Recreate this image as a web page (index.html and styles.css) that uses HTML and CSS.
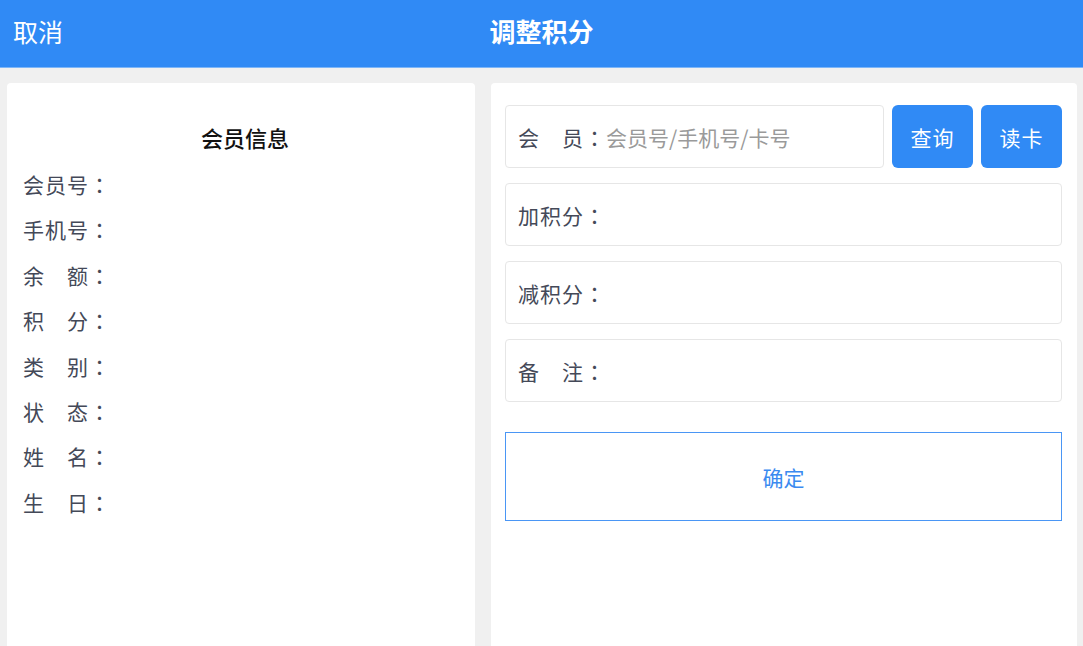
FILE: index.html
```html
<!DOCTYPE html>
<html lang="zh-CN">
<head>
    <meta charset="UTF-8">
    <meta name="viewport" content="width=device-width, initial-scale=1.0">
    <title>调整积分</title>
    <link rel="stylesheet" href="styles.css">
</head>
<body>
    <header class="topbar">
        <span class="topbar-cancel">取消</span>
        <h1 class="topbar-title">调整积分</h1>
    </header>

    <main class="layout">
        <section class="panel member-panel">
            <h2 class="member-title">会员信息</h2>
            <ul class="member-list">
                <li>会员号<span class="colon" lang="zh-TW">：</span></li>
                <li>手机号<span class="colon" lang="zh-TW">：</span></li>
                <li>余　额<span class="colon" lang="zh-TW">：</span></li>
                <li>积　分<span class="colon" lang="zh-TW">：</span></li>
                <li>类　别<span class="colon" lang="zh-TW">：</span></li>
                <li>状　态<span class="colon" lang="zh-TW">：</span></li>
                <li>姓　名<span class="colon" lang="zh-TW">：</span></li>
                <li>生　日<span class="colon" lang="zh-TW">：</span></li>
            </ul>
        </section>

        <section class="panel form-panel">
            <div class="search-row">
                <label class="field">
                    <span class="field-label">会　员<span class="colon" lang="zh-TW">：</span></span>
                    <input type="text" class="field-input" placeholder="会员号/手机号/卡号">
                </label>
                <button class="btn">查询</button>
                <button class="btn">读卡</button>
            </div>
            <label class="field">
                <span class="field-label">加积分<span class="colon" lang="zh-TW">：</span></span>
                <input type="text" class="field-input">
            </label>
            <label class="field">
                <span class="field-label">减积分<span class="colon" lang="zh-TW">：</span></span>
                <input type="text" class="field-input">
            </label>
            <label class="field">
                <span class="field-label">备　注<span class="colon" lang="zh-TW">：</span></span>
                <input type="text" class="field-input">
            </label>
            <button class="confirm-btn">确定</button>
        </section>
    </main>
</body>
</html>
```

FILE: styles.css
```css
:root {
    --blue: #308af5;
    --bg: #f0f0f0;
    --label: #444958;
    --border: #e6e6e6;
}

* {
    box-sizing: border-box;
    margin: 0;
    padding: 0;
}

html, body {
    height: 100%;
}

body {
    font-family: "Noto Sans CJK SC", "Noto Sans", sans-serif;
    background: var(--bg);
    overflow: hidden;
}

.topbar {
    height: 68px;
    background: var(--blue);
    border-bottom: 1px solid #7db6f8;
    color: #fff;
    display: flex;
    align-items: center;
    justify-content: center;
    position: relative;
}

.topbar-cancel {
    position: absolute;
    left: 13px;
    top: 12px;
    font-size: 25px;
    line-height: 38px;
}

.topbar-title {
    font-size: 26px;
    font-weight: bold;
    line-height: 38px;
    margin-top: -5px;
}

.layout {
    display: flex;
    gap: 16px;
    padding: 15px 6px 0 7px;
    height: calc(100% - 68px);
}

.panel {
    background: #fff;
    border-radius: 4px 4px 0 0;
}

.member-panel {
    width: 468px;
    padding: 31px 16px 0;
}

.member-title {
    text-align: center;
    font-size: 22px;
    font-weight: 500;
    color: #111;
    line-height: 46px;
    margin-bottom: 2px;
    padding-left: 8px;
}

.member-list {
    list-style: none;
    font-size: 21px;
    letter-spacing: 1px;
    color: var(--label);
}

.member-list li {
    line-height: 45.4px;
}

/* centred full-width colon, as in the original */
.colon {
    font-family: "Noto Sans CJK TC", sans-serif;
}

.form-panel {
    flex: 1;
    padding: 22px 15px 0 14px;
    display: flex;
    flex-direction: column;
    gap: 15px;
}

.search-row {
    display: flex;
    gap: 8px;
}

.search-row .field {
    flex: 1;
}

.field {
    height: 63px;
    border: 1px solid var(--border);
    border-radius: 4px;
    display: flex;
    align-items: center;
    padding: 0 12px;
    font-size: 21px;
}

.field-label {
    color: var(--label);
    letter-spacing: 1px;
    white-space: nowrap;
}

.field-input {
    flex: 1;
    min-width: 0;
    border: none;
    outline: none;
    font: inherit;
    color: #333;
    background: transparent;
}

.field-input::placeholder {
    color: #9a9a9a;
}

.btn {
    width: 81px;
    height: 63px;
    border: none;
    border-radius: 6px;
    background: var(--blue);
    color: #fff;
    font: inherit;
    font-size: 21px;
    letter-spacing: 1px;
}

.confirm-btn {
    margin-top: 15px;
    height: 89px;
    border: 1px solid #4a96f5;
    background: #fff;
    color: #3a8af0;
    font: inherit;
    font-size: 21px;
}
```
